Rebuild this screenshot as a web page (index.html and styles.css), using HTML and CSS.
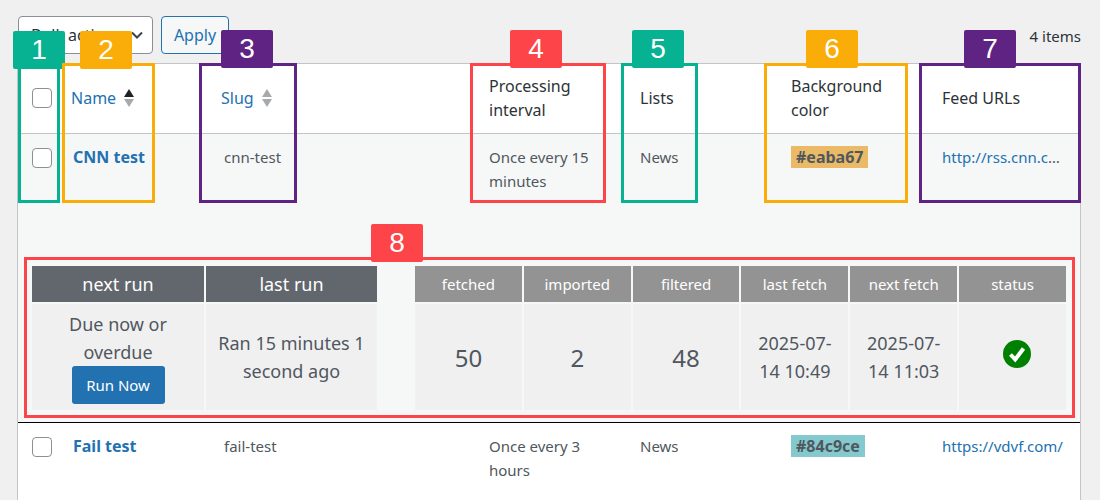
FILE: index.html
```html
<!DOCTYPE html>
<html lang="en">
<head>
<meta charset="utf-8">
<title>Feeds</title>
<link rel="stylesheet" href="styles.css">
</head>
<body>
<div class="page">
  <div class="toolbar">
    <div class="select"><span>Bulk actions</span>
      <svg class="chev" width="12" height="8" viewBox="0 0 12 8"><path d="M1 1.5l5 5 5-5" fill="none" stroke="#3c434a" stroke-width="2"/></svg>
    </div>
    <button class="apply" type="button">Apply</button>
    <span class="count">4 items</span>
  </div>
  <div class="wrap">
    <table class="list">
      <colgroup>
        <col class="c-cb"><col class="c-name"><col class="c-slug"><col class="c-std"><col class="c-std"><col class="c-std"><col class="c-feed">
      </colgroup>
      <thead>
        <tr>
          <th><span class="cb"></span></th>
          <th><a class="sort">Name <span class="arrows"><i class="up dark"></i><i class="down"></i></span></a></th>
          <th><a class="sort">Slug <span class="arrows"><i class="up"></i><i class="down"></i></span></a></th>
          <th>Processing interval</th>
          <th>Lists</th>
          <th>Background color</th>
          <th>Feed URLs</th>
        </tr>
      </thead>
      <tbody>
        <tr class="alt">
          <td class="t-cb"><span class="cb"></span></td>
          <td class="t-name"><a class="title">CNN test</a></td>
          <td class="t-slug">cnn-test</td>
          <td>Once every 15 minutes</td>
          <td>News</td>
          <td><span class="swatch s-orange">#eaba67</span></td>
          <td class="t-feed t-cut"><a class="url">http://rss.cnn.com/rss/edition.rss</a></td>
        </tr>
        <tr class="alt detail">
          <td colspan="7">
            <div class="stats">
              <table class="stat stat-run">
                <colgroup><col class="w172"><col class="w171"></colgroup>
                <thead><tr><th>next run</th><th>last run</th></tr></thead>
                <tbody><tr>
                  <td class="run-cell">Due now or overdue<button class="run" type="button">Run Now</button></td>
                  <td>Ran 15 minutes 1 second ago</td>
                </tr></tbody>
              </table>
              <table class="stat stat-fetch">
                <thead><tr><th>fetched</th><th>imported</th><th>filtered</th><th>last fetch</th><th>next fetch</th><th>status</th></tr></thead>
                <tbody><tr>
                  <td class="num">50</td>
                  <td class="num">2</td>
                  <td class="num">48</td>
                  <td>2025-07-14 10:49</td>
                  <td>2025-07-14 11:03</td>
                  <td class="ok"><svg width="28" height="28" viewBox="0 0 28 28"><circle cx="14" cy="14" r="14" fill="#008000"/><path d="M7.5 14.5l4.7 5L20.5 8.5" fill="none" stroke="#fff" stroke-width="4"/></svg></td>
                </tr></tbody>
              </table>
            </div>
          </td>
        </tr>
        <tr>
          <td class="t-cb"><span class="cb"></span></td>
          <td class="t-name"><a class="title">Fail test</a></td>
          <td class="t-slug">fail-test</td>
          <td>Once every 3 hours</td>
          <td>News</td>
          <td><span class="swatch s-teal">#84c9ce</span></td>
          <td class="t-feed"><a class="url">https://vdvf.com/</a></td>
        </tr>
      </tbody>
    </table>
  </div>

  <div class="box b1 green"></div><div class="tag t1 green">1</div>
  <div class="box b2 orange"></div><div class="tag t2 orange">2</div>
  <div class="box b3 purple"></div><div class="tag t3 purple">3</div>
  <div class="box b4 red"></div><div class="tag t4 red">4</div>
  <div class="box b5 green"></div><div class="tag t5 green">5</div>
  <div class="box b6 orange"></div><div class="tag t6 orange">6</div>
  <div class="box b7 purple"></div><div class="tag t7 purple">7</div>
  <div class="box b8 red"></div><div class="tag t8 red">8</div>
</div>
</body>
</html>
```
FILE: styles.css
```css
* { box-sizing: border-box; }
html, body { margin: 0; height: 500px; overflow: hidden; }
body { background: #f0f0f1; color: #50575e; font-family: "Noto Sans", "Open Sans", sans-serif; font-size: 15px; line-height: 24px; }
.page { position: relative; height: 500px; overflow: hidden; display: flex; flex-direction: column; }

.toolbar { height: 63px; flex: none; padding: 16px 19px 0 18px; display: flex; align-items: flex-start; }
.select { width: 135px; height: 38px; border: 1px solid #8c8f94; border-radius: 4px; background: #fff; color: #2c3338; font-size: 16px; display: flex; align-items: center; justify-content: space-between; padding: 0 9px 0 12px; }
.chev { flex: none; }
.apply { width: 68px; height: 38px; margin-left: 8px; border: 1px solid #2271b1; border-radius: 4px; background: #f6f7f7; color: #2271b1; font: 16px "Noto Sans", sans-serif; padding: 0; }
.count { margin-left: auto; margin-top: 8px; color: #2c3338; font-size: 15px; line-height: 24px; }

.wrap { flex: 1; margin-left: 17px; width: 1064px; border: 1px solid #c3c4c7; border-bottom: 0; background: #fff; }
.list { width: 1062px; table-layout: fixed; border-collapse: collapse; }
.c-cb { width: 45px; }
.c-name { width: 150px; }
.c-slug { width: 268px; }
.c-std { width: 151px; }
.c-feed { width: 146px; }

.list > thead th { height: 69px; padding: 0 20px 0 8px; text-align: left; font-weight: 400; font-size: 16px; line-height: 24px; color: #2c3338; border-bottom: 1px solid #c3c4c7; vertical-align: middle; }
.list > thead th:first-child { padding: 0 0 0 14px; }
.list > thead th:last-child { padding-right: 8px; }
.list > tbody > tr > td { padding: 11px 20px 9px 8px; vertical-align: top; }
.list > tbody > tr > .t-cb { padding: 14px 0 0 14px; }
.list > tbody > tr > .t-name { padding-left: 10px; }
.list > tbody > tr > .t-slug { padding-left: 11px; }
.list > tbody > tr > .t-feed { padding-right: 8px; white-space: nowrap; overflow: hidden; text-overflow: ellipsis; }
.list > tbody > tr > .t-cut { padding-right: 18px; }
.alt { background: #f6f7f7; }

.cb { display: block; width: 20px; height: 20px; border: 1px solid #8c8f94; border-radius: 4px; background: #fff; }
.sort { color: #2271b1; display: inline-flex; align-items: center; gap: 8px; }
.arrows { display: inline-flex; flex-direction: column; gap: 2px; }
.up, .down { display: block; width: 0; height: 0; border-left: 5.5px solid transparent; border-right: 5.5px solid transparent; }
.up { border-bottom: 8px solid #a7aaad; }
.up.dark { border-bottom-color: #1d2327; }
.down { border-top: 8px solid #a7aaad; }
.title { color: #2271b1; font-weight: 700; font-size: 16px; }
.url { color: #2271b1; }
.swatch { display: inline-block; padding: 0 5px; font-weight: 700; font-size: 16px; line-height: 22px; }
.s-orange { background: #eaba67; }
.s-teal { background: #84c9ce; }

.list > tbody > .detail > td { padding: 62px 12px 10px; border-bottom: 1px solid #000; }
.stats { display: flex; justify-content: space-between; }
.stat { table-layout: fixed; border-collapse: separate; border-spacing: 2px; text-align: center; }
.stat-run { width: 349px; }
.stat-fetch { width: 655px; }
.w172 { width: 172px; }
.w171 { width: 171px; }
.stat th { height: 36px; padding: 1px 0 0; font-weight: 400; color: #fff; vertical-align: middle; }
.stat-run th { background: #62666d; font-size: 18px; }
.stat-fetch th { background: #939393; font-size: 15px; }
.stat td { height: 106px; padding: 0 8px; background: #f0f0f1; font-size: 18px; line-height: 28px; vertical-align: middle; }
.stat .num { font-size: 24px; padding-top: 2px; }
.stat .ok { padding: 0 0 8px 8px; }
.ok svg { display: inline-block; vertical-align: middle; }
.run-cell { padding-top: 2px; }
.run { display: block; margin: 0 auto; width: 93px; height: 38px; border: 0; border-radius: 3px; background: #2271b1; color: #fff; font: 15px "Noto Sans", sans-serif; padding: 0; }

.box { position: absolute; border: 3px solid; background: transparent; }
.tag { position: absolute; width: 52px; height: 38px; border-radius: 2px; color: #fff; font: 28px/38px "Liberation Sans", Arial, sans-serif; text-align: center; }
.box.green { border-color: #06b292; }
.box.orange { border-color: #faac08; }
.box.purple { border-color: #5f2383; }
.box.red { border-color: #fd4448; }
.tag.green { background: #06b292; }
.tag.orange { background: #faac08; }
.tag.purple { background: #5f2383; }
.tag.red { background: #fd4448; }

.b1 { left: 18px; top: 63px; width: 42px; height: 140px; }
.b2 { left: 62px; top: 63px; width: 93px; height: 140px; }
.b3 { left: 199px; top: 63px; width: 98px; height: 140px; }
.b4 { left: 470px; top: 63px; width: 136px; height: 140px; }
.b5 { left: 621px; top: 63px; width: 77px; height: 140px; }
.b6 { left: 764px; top: 63px; width: 144px; height: 140px; }
.b7 { left: 919px; top: 63px; width: 162px; height: 140px; }
.b8 { left: 24px; top: 257px; width: 1051px; height: 161px; }
.t1 { left: 13px; top: 31px; }
.t2 { left: 80px; top: 31px; }
.t3 { left: 221px; top: 30px; }
.t4 { left: 510px; top: 30px; }
.t5 { left: 632px; top: 30px; }
.t6 { left: 806px; top: 30px; }
.t7 { left: 964px; top: 30px; }
.t8 { left: 371px; top: 224px; }
```
